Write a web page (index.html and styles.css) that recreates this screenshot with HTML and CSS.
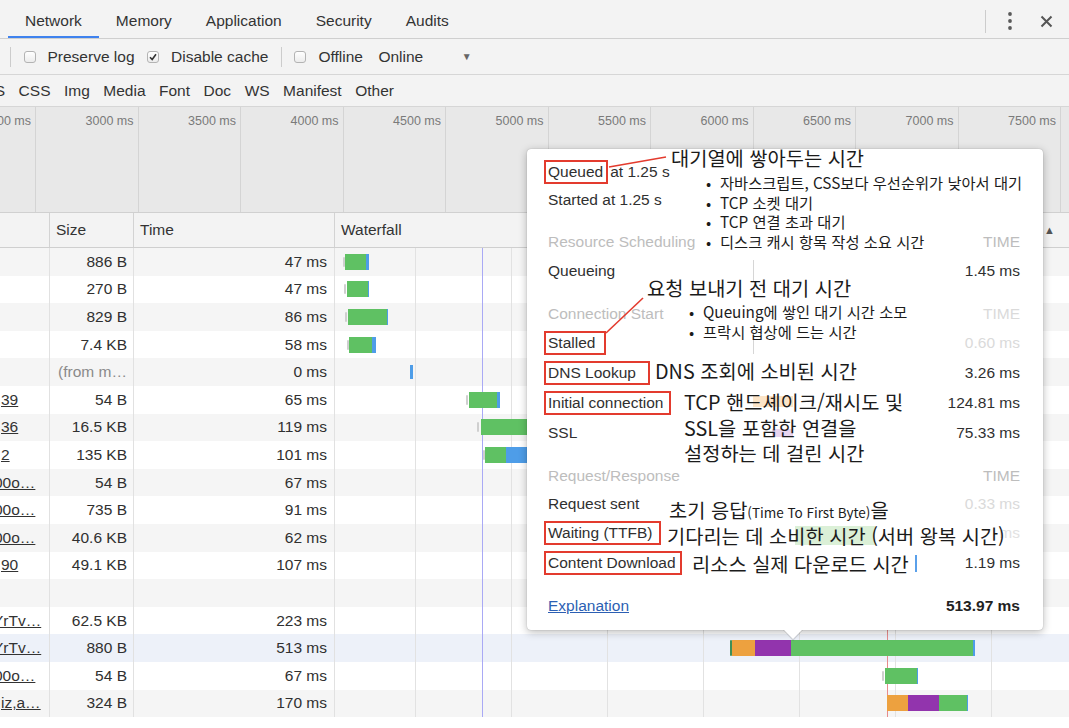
FILE: index.html
```html
<!DOCTYPE html>
<html lang="ko">
<head>
<meta charset="utf-8">
<title>Network</title>
<link rel="stylesheet" href="styles.css">
</head>
<body>
<div class="app">
  <div class="tabbar">
    <div class="tabs">
      <div class="tab active">Network</div>
      <div class="tab">Memory</div>
      <div class="tab">Application</div>
      <div class="tab">Security</div>
      <div class="tab">Audits</div>
    </div>
    <div class="tab-actions">
      <span class="vsep tall"></span>
      <svg class="dots" width="6" height="20" viewBox="0 0 6 20"><circle cx="3" cy="3" r="1.9"/><circle cx="3" cy="10" r="1.9"/><circle cx="3" cy="17" r="1.9"/></svg>
      <svg class="close" width="13" height="13" viewBox="0 0 13 13"><path d="M1.5 1.5 L11.5 11.5 M11.5 1.5 L1.5 11.5"/></svg>
    </div>
  </div>

  <div class="toolbar">
    <span class="vsep"></span>
    <label class="check"><span class="box"></span>Preserve log</label>
    <label class="check"><span class="box"><svg width="10" height="10" viewBox="0 0 10 10"><path d="M2 5.2 L4.2 7.5 L8 2.2"/></svg></span>Disable cache</label>
    <span class="vsep"></span>
    <label class="check"><span class="box"></span>Offline</label>
    <span class="throttle">Online</span>
    <span class="caret">▼</span>
  </div>

  <div class="filters">
    <span>JS</span><span>CSS</span><span>Img</span><span>Media</span><span>Font</span><span>Doc</span><span>WS</span><span>Manifest</span><span>Other</span>
  </div>

  <div class="overview">
    <div class="ov-track">
      <div class="ov-cell">2500 ms</div>
      <div class="ov-cell">3000 ms</div>
      <div class="ov-cell">3500 ms</div>
      <div class="ov-cell">4000 ms</div>
      <div class="ov-cell">4500 ms</div>
      <div class="ov-cell">5000 ms</div>
      <div class="ov-cell">5500 ms</div>
      <div class="ov-cell">6000 ms</div>
      <div class="ov-cell">6500 ms</div>
      <div class="ov-cell">7000 ms</div>
      <div class="ov-cell">7500 ms</div>
    </div>
  </div>

  <div class="grid thead">
    <div class="c name"></div>
    <div class="c">Size</div>
    <div class="c">Time</div>
    <div class="c wfh">Waterfall<span class="sort">▲</span></div>
  </div>

  <div class="tbody">
    <div class="grid row odd"><div class="c name"></div><div class="c num">886 B</div><div class="c num t">47 ms</div>
      <div class="c wf"><i class="tick" style="margin-left:8px"></i><i class="g" style="width:21px"></i><i class="b" style="width:3px"></i></div></div>
    <div class="grid row"><div class="c name"></div><div class="c num">270 B</div><div class="c num t">47 ms</div>
      <div class="c wf"><i class="tick" style="margin-left:9px"></i><i class="g" style="margin-left:1px;width:21px"></i><i class="b" style="width:1px"></i></div></div>
    <div class="grid row odd"><div class="c name"></div><div class="c num">829 B</div><div class="c num t">86 ms</div>
      <div class="c wf"><i class="tick" style="margin-left:10px"></i><i class="g" style="margin-left:1px;width:39px"></i><i class="b" style="width:1px"></i></div></div>
    <div class="grid row"><div class="c name"></div><div class="c num">7.4 KB</div><div class="c num t">58 ms</div>
      <div class="c wf"><i class="tick" style="margin-left:12px"></i><i class="g" style="width:23px"></i><i class="b" style="width:4px"></i></div></div>
    <div class="grid row odd"><div class="c name"></div><div class="c num muted">(from m…</div><div class="c num t">0 ms</div>
      <div class="c wf"><i class="b short" style="margin-left:75px;width:3px"></i></div></div>
    <div class="grid row"><div class="c name"><span class="link">39</span></div><div class="c num">54 B</div><div class="c num t">65 ms</div>
      <div class="c wf"><i class="tick" style="margin-left:131px"></i><i class="g" style="margin-left:1px;width:28px"></i><i class="b" style="width:3px"></i></div></div>
    <div class="grid row odd"><div class="c name"><span class="link">36</span></div><div class="c num">16.5 KB</div><div class="c num t">119 ms</div>
      <div class="c wf"><i class="tick" style="margin-left:142px"></i><i class="g" style="margin-left:2px;width:60px"></i></div></div>
    <div class="grid row"><div class="c name"><span class="link">2</span></div><div class="c num">135 KB</div><div class="c num t">101 ms</div>
      <div class="c wf"><i class="tick" style="margin-left:148px"></i><i class="g" style="width:21px"></i><i class="b" style="width:40px"></i></div></div>
    <div class="grid row odd"><div class="c name"><span class="link cut">00o…</span></div><div class="c num">54 B</div><div class="c num t">67 ms</div><div class="c wf"></div></div>
    <div class="grid row"><div class="c name"><span class="link cut">00o…</span></div><div class="c num">735 B</div><div class="c num t">91 ms</div><div class="c wf"></div></div>
    <div class="grid row odd"><div class="c name"><span class="link cut">00o…</span></div><div class="c num">40.6 KB</div><div class="c num t">62 ms</div><div class="c wf"></div></div>
    <div class="grid row"><div class="c name"><span class="link">90</span></div><div class="c num">49.1 KB</div><div class="c num t">107 ms</div><div class="c wf"></div></div>
    <div class="grid row odd"><div class="c name"></div><div class="c num"></div><div class="c num t"></div><div class="c wf"></div></div>
    <div class="grid row"><div class="c name"><span class="link cut2">YrTv…</span></div><div class="c num">62.5 KB</div><div class="c num t">223 ms</div><div class="c wf"></div></div>
    <div class="grid row sel"><div class="c name"><span class="link cut2">YrTv…</span></div><div class="c num">880 B</div><div class="c num t">513 ms</div>
      <div class="c wf"><i class="tick dk" style="margin-left:395px"></i><i class="o" style="width:23px"></i><i class="p" style="width:36px"></i><i class="g" style="width:182px"></i><i class="b" style="width:2px"></i></div></div>
    <div class="grid row"><div class="c name"><span class="link cut">00o…</span></div><div class="c num">54 B</div><div class="c num t">67 ms</div>
      <div class="c wf"><i class="tick" style="margin-left:547px"></i><i class="g" style="margin-left:1px;width:32px"></i><i class="b" style="width:1px"></i></div></div>
    <div class="grid row odd"><div class="c name"><span class="link">iz,a…</span></div><div class="c num">324 B</div><div class="c num t">170 ms</div>
      <div class="c wf"><i class="o" style="margin-left:552px;width:21px"></i><i class="p" style="width:31px"></i><i class="g" style="width:28px"></i><i class="b" style="width:1px"></i></div></div>
  </div>

  <div class="popup">
    <div class="prow tight"><div class="pl"><span class="mark m-q">Queued</span><span class="after">at 1.25 s</span></div><div></div><div></div></div>
    <div class="prow tight"><div class="pl">Started at 1.25 s</div><div></div><div></div></div>
    <div class="prow sec"><div class="pl">Resource Scheduling</div><div></div><div class="pv">TIME</div></div>
    <div class="prow"><div class="pl">Queueing</div><div class="track"><i class="line"></i></div><div class="pv dark">1.45 ms</div></div>
    <div class="prow sec"><div class="pl">Connection Start</div><div></div><div class="pv faint">TIME</div></div>
    <div class="prow"><div class="pl"><span class="mark m-s">Stalled</span></div><div class="track"><i class="line"></i></div><div class="pv faint">0.60 ms</div></div>
    <div class="prow"><div class="pl"><span class="mark m-d">DNS Lookup</span></div><div></div><div class="pv dark">3.26 ms</div></div>
    <div class="prow"><div class="pl"><span class="mark m-i">Initial connection</span></div><div class="track"><i class="pb po" style="width:40px"></i></div><div class="pv dark">124.81 ms</div></div>
    <div class="prow"><div class="pl">SSL</div><div class="track"><i class="pb pp" style="margin-left:19px;width:21px"></i></div><div class="pv dark">75.33 ms</div></div>
    <div class="prow sec"><div class="pl">Request/Response</div><div></div><div class="pv">TIME</div></div>
    <div class="prow tight"><div class="pl">Request sent</div><div></div><div class="pv faint">0.33 ms</div></div>
    <div class="prow"><div class="pl"><span class="mark m-w">Waiting (TTFB)</span></div><div class="track"><i class="pb pg" style="margin-left:42px;width:80px"></i></div><div class="pv ghost">ms</div></div>
    <div class="prow"><div class="pl"><span class="mark m-c">Content Download</span></div><div class="track"><i class="pb pbl" style="margin-left:162px;width:2px"></i></div><div class="pv dark">1.19 ms</div></div>
    <div class="prow sec"><div class="pl"><span class="explain">Explanation</span></div><div></div><div class="pv total">513.97 ms</div></div>

    <svg class="leaders" width="516" height="481" viewBox="0 0 516 481">
      <path d="M82 18 L139 8"/>
      <path d="M79 184 L116 149"/>
    </svg>

    <div class="note n1">대기열에 쌓아두는 시간</div>
    <ul class="bullets b1">
      <li>자바스크립트, CSS보다 우선순위가 낮아서 대기</li>
      <li>TCP 소켓 대기</li>
      <li>TCP 연결 초과 대기</li>
      <li>디스크 캐시 항목 작성 소요 시간</li>
    </ul>
    <div class="note n2">요청 보내기 전 대기 시간</div>
    <ul class="bullets b2">
      <li>Queuing에 쌓인 대기 시간 소모</li>
      <li>프락시 협상에 드는 시간</li>
    </ul>
    <div class="note n3">DNS 조회에 소비된 시간</div>
    <div class="note n4">TCP 핸드셰이크/재시도 및<br>SSL을 포함한 연결을<br>설정하는 데 걸린 시간</div>
    <div class="note n5">초기 응답<small>(Time To First Byte)</small>을</div>
    <div class="note n6">기다리는 데 소비한 시간 (서버 왕복 시간)</div>
    <div class="note n7">리소스 실제 다운로드 시간</div>
  </div>
</div>
</body>
</html>
```
FILE: styles.css
```css
* { box-sizing: border-box; margin: 0; padding: 0; }
html, body { width: 1069px; height: 728px; overflow: hidden; background: #fff; }
body { font-family: "Liberation Sans", Arial, sans-serif; font-size: 15.5px; color: #303030; }

.app { position: relative; width: 1069px; height: 728px; overflow: hidden; display: flex; flex-direction: column; }

/* tab bar */
.tabbar { flex: none; height: 39px; display: flex; justify-content: space-between; background: #f3f3f3; border-bottom: 1px solid #cfcfcf; }
.tabs { display: flex; padding-left: 8px; }
.tab { display: flex; align-items: center; padding: 4px 17px 0; color: #333; }
.tab.active { box-shadow: inset 0 -2px 0 #3f82ee; }
.tab-actions { display: flex; align-items: center; padding-right: 16px; }
.vsep { display: inline-block; width: 1px; height: 20px; background: #cccccc; flex: none; }
.vsep.tall { height: 23px; margin-top: 4px; margin-right: 21px; }
.dots { fill: #5a5a5a; margin-top: 4px; margin-right: 27px; }
.close { stroke: #555; stroke-width: 2; fill: none; margin-top: 4px; }

/* toolbar */
.toolbar { flex: none; height: 36px; display: flex; align-items: center; gap: 12.5px; padding-left: 10px; background: #f3f3f3; border-bottom: 1px solid #d6d6d6; color: #333; }
.check { display: flex; align-items: center; gap: 12px; }
.box { width: 12px; height: 12px; border: 1px solid #b3b3b3; border-radius: 3px; background: linear-gradient(#fff, #ececec); display: flex; align-items: center; justify-content: center; }
.box svg { fill: none; stroke: #333; stroke-width: 1.6; }
.throttle { margin-left: 3px; }
.caret { margin-left: 26px; font-size: 10px; color: #666; }

/* filters */
.filters { flex: none; height: 32px; display: flex; align-items: center; gap: 13.5px; margin-left: -13px; background: #f3f3f3; border-bottom: 1px solid #d6d6d6; color: #333; }

/* overview */
.overview { flex: none; height: 106px; background: #e8e8e8; border-bottom: 1px solid #d0d0d0; overflow: hidden; }
.ov-track { display: flex; height: 100%; margin-left: -66.5px; }
.ov-cell { flex: 0 0 102.5px; height: 100%; border-right: 1px solid #d4d4d4; text-align: right; padding: 6px 4px 0 0; font-size: 12.5px; line-height: 16px; color: #7a7a7a; white-space: nowrap; }

/* table */
.grid { display: grid; grid-template-columns: 50px 84px 201px 1fr; }
.thead { flex: none; height: 35px; background: #f3f3f3; border-bottom: 1px solid #cfcfcf; }
.thead .c { display: flex; align-items: center; padding-left: 6px; border-right: 1px solid #d3d3d3; color: #333; }
.thead .wfh { border-right: 0; position: relative; }
.sort { margin-left: auto; margin-right: 14px; font-size: 11px; color: #555; }

.tbody { flex: 1; overflow: hidden; }
.row { height: 27.6px; background: #fff; }
.row.odd { background: #f5f5f5; }
.row.sel { background: #edf1f9; }
.row .c { display: flex; align-items: center; border-right: 1px solid #e1e1e1; white-space: nowrap; overflow: hidden; }
.row .num { justify-content: flex-end; padding-right: 6px; }
.row .num.t { padding-right: 7px; }
.muted { color: #8a8a8a; }
.name { padding-left: 1px; }
.link { text-decoration: underline; color: #333; }
.link.cut { margin-left: -7px; }
.link.cut2 { margin-left: -8px; }

.row .wf { border-right: 0; overflow: visible;
  background-image:
    linear-gradient(#a9a9f5, #a9a9f5),
    linear-gradient(#e78b8b, #e78b8b),
    linear-gradient(to right, #e2e2e2 0 1px, transparent 1px);
  background-size: 1px 100%, 1px 100%, 96px 100%;
  background-position: 147px 0, 552px 0, 80px 0;
  background-repeat: no-repeat, no-repeat, repeat-x;
}
.wf i { display: block; height: 16px; flex: none; }
.wf .tick { width: 2px; height: 10px; background: #cfcfcf; border-radius: 1px; }
.wf .tick.dk { background: #3f8f58; height: 16px; }
.wf .g { background: #5fc163; }
.wf .b { background: #4e9de8; }
.wf .b.short { height: 14px; }
.wf .o { background: #eda13f; }
.wf .p { background: #9234ad; }

/* popup */
.popup { position: absolute; left: 527px; top: 149px; width: 516px; height: 481px; background: #fff; border-radius: 4px; padding: 9px 23px 10px 21px; box-shadow: 0 2px 9px rgba(0,0,0,.28), 0 0 1px rgba(0,0,0,.35); }
.popup::before { content: ""; position: absolute; left: 256px; bottom: -11px; border-style: solid; border-width: 11px 10px 0 10px; border-color: rgba(0,0,0,.12) transparent transparent transparent; }
.popup::after { content: ""; position: absolute; left: 257px; bottom: -9px; border-style: solid; border-width: 9px 9px 0 9px; border-color: #fff transparent transparent transparent; }

.prow { display: grid; grid-template-columns: 205px 1fr auto; align-items: center; height: 30px; white-space: nowrap; }
.prow.tight { height: 28px; }
.prow.sec { height: 28px; margin-top: 14px; }
.prow.sec .pl { color: #bdbdbd; }
.prow.sec .pv { color: #bdbdbd; }
.after { margin-left: 2px; }
.pv { text-align: right; }
.pv.dark { color: #303030; }
.pv.faint { color: #dadada !important; }
.pv.ghost { color: #e2e2e2; }
.pv.total { color: #222 !important; font-weight: bold; }
.explain { color: #2c5fb3; text-decoration: underline; }

.mark { display: inline-block; margin-left: -4px; padding: 1px 7px 1px 2px; border: 2px solid #e33b2e; line-height: 18px; }
.mark.m-q { padding-right: 3px; }
.mark.m-s { padding-right: 9px; }
.mark.m-d { padding-right: 12px; }
.mark.m-i { padding-right: 6px; }
.mark.m-w { padding-right: 7px; }
.mark.m-c { padding-right: 4px; }

.track { display: flex; align-items: center; height: 100%; }
.track .line { display: block; width: 1px; height: 22px; background: #d6d6d6; }
.pb { display: block; flex: none; }
.po { height: 11px; background: #fce4c7; margin-top: -4px; }
.pp { height: 8px; background: #e7d4ef; }
.pg { height: 19px; background: #dbf0d7; margin-top: 5px; }
.pbl { height: 17px; background: #5aa0ea; }

.leaders { position: absolute; left: 0; top: 0; overflow: visible; pointer-events: none; }
.leaders path { stroke: #e33b2e; stroke-width: 1.6; fill: none; }

.note { position: absolute; font-family: "Noto Sans CJK KR", "Noto Sans", sans-serif; font-size: 19.8px; line-height: 24px; color: #1b1b1b; white-space: nowrap; }
.note small { font-size: 13.5px; }
.n1 { left: 144px; top: -3px; }
.n2 { left: 120px; top: 127px; }
.n3 { left: 128px; top: 210px; }
.n4 { left: 157px; top: 240px; line-height: 25.5px; }
.n5 { left: 142px; top: 349px; }
.n6 { left: 140px; top: 375px; }
.n7 { left: 165px; top: 403px; }

.bullets { position: absolute; list-style: none; font-family: "Noto Sans CJK KR", "Noto Sans", sans-serif; font-size: 15.3px; line-height: 19.7px; color: #1b1b1b; white-space: nowrap; }
.bullets li { display: flex; }
.bullets li::before { content: "•"; width: 14px; flex: none; }
.b1 { left: 179px; top: 24px; }
.b2 { left: 162px; top: 153px; }
```
